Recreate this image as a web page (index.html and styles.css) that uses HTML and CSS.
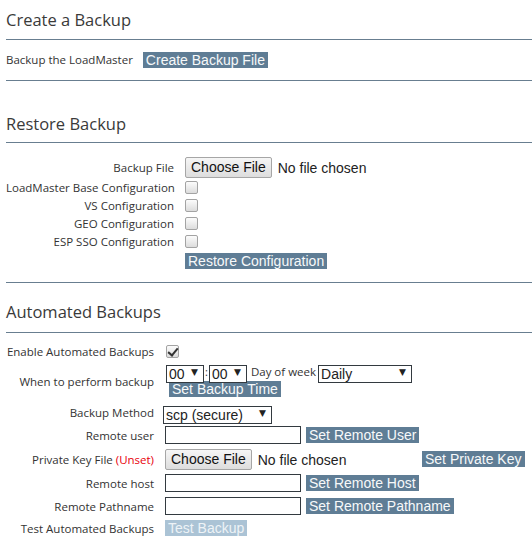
FILE: index.html
```html
<!DOCTYPE html>
<html>
<head>
<meta charset="utf-8">
<link rel="stylesheet" href="styles.css">
</head>
<body>
<div class="page">
  <section class="sec sec-create">
    <h2 class="title t1">Create a Backup</h2>
    <div class="inline-row">
      <span class="lbl">Backup the LoadMaster</span>
      <button class="btn">Create Backup File</button>
    </div>
  </section>

  <section class="sec sec-restore">
    <h2 class="title t2">Restore Backup</h2>
    <div class="form restore-form">
      <span class="lbl r">Backup File</span>
      <div class="ctl"><input type="file" class="file"></div>
      <span class="lbl r">LoadMaster Base Configuration</span>
      <div class="ctl"><input type="checkbox" class="cb"></div>
      <span class="lbl r">VS Configuration</span>
      <div class="ctl"><input type="checkbox" class="cb"></div>
      <span class="lbl r">GEO Configuration</span>
      <div class="ctl"><input type="checkbox" class="cb"></div>
      <span class="lbl r">ESP SSO Configuration</span>
      <div class="ctl"><input type="checkbox" class="cb"></div>
      <span></span>
      <div class="ctl end"><button class="btn">Restore Configuration</button></div>
    </div>
  </section>

  <section class="sec-last">
    <h2 class="title t3">Automated Backups</h2>
    <div class="form auto-form">
      <span class="lbl r">Enable Automated Backups</span>
      <div class="ctl"><input type="checkbox" class="cb cb-auto" checked></div>

      <span class="lbl r when">When to perform backup</span>
      <div class="ctl when-ctl">
        <div class="time-line">
          <span class="sel w-hh"><select><option>00</option></select></span>
          <span class="colon">:</span>
          <span class="sel w-mm"><select><option>00</option></select></span>
          <span class="dow">Day of week</span>
          <span class="sel w-day"><select><option>Daily</option></select></span>
        </div>
        <button class="btn btn-time">Set Backup Time</button>
      </div>

      <span class="lbl r">Backup Method</span>
      <div class="ctl"><span class="sel w-method"><select><option>scp (secure)</option></select></span></div>

      <span class="lbl r">Remote user</span>
      <div class="ctl"><input type="text" class="txt"><button class="btn">Set Remote User</button></div>

      <span class="lbl r">Private Key File <span class="unset">(Unset)</span></span>
      <div class="ctl"><input type="file" class="file file-key"><button class="btn">Set Private Key</button></div>

      <span class="lbl r">Remote host</span>
      <div class="ctl"><input type="text" class="txt"><button class="btn">Set Remote Host</button></div>

      <span class="lbl r">Remote Pathname</span>
      <div class="ctl"><input type="text" class="txt"><button class="btn">Set Remote Pathname</button></div>

      <span class="lbl r">Test Automated Backups</span>
      <div class="ctl"><button class="btn btn-off">Test Backup</button></div>
    </div>
  </section>
</div>
</body>
</html>
```

FILE: styles.css
```css
html, body {
  margin: 0;
  padding: 0;
  background: #ffffff;
}

.page {
  margin-left: 6px;
  font-family: "Open Sans", "Noto Sans", sans-serif;
  color: #333333;
}

.sec {
  border-bottom: 1px solid #687e90;
}

.title {
  margin: 0;
  font-weight: normal;
  font-size: 16.5px;
  line-height: 20px;
  color: #3a3a3a;
  border-bottom: 1px solid #687e90;
}

.t1 { padding: 10px 0 9px; }
.t2 { padding: 33px 0 8px; }
.t3 { padding: 19px 0 10px; }

.sec-create { padding-bottom: 12px; }

.inline-row {
  display: flex;
  align-items: center;
  gap: 10px;
  margin-top: 12px;
  height: 16px;
}

.lbl {
  font-size: 11.5px;
  line-height: 14px;
  color: #333333;
  white-space: nowrap;
}

.lbl.r {
  text-align: right;
  align-self: center;
  position: relative;
  top: 1px;
}

.unset { color: #e8000b; }

.btn {
  font-family: "Liberation Sans", Arial, sans-serif;
  font-size: 14px;
  line-height: 16px;
  height: 16px;
  padding: 0 3px;
  margin: 0;
  border: 0;
  border-radius: 0;
  background: #5f7d95;
  color: #f7f9fa;
  white-space: nowrap;
}

.btn-off {
  background: #abc3d5;
  color: #eef3f7;
}

.form {
  display: grid;
  column-gap: 11px;
  align-items: center;
}

.restore-form {
  grid-template-columns: 168px auto;
  grid-template-rows: 22px 18px 18px 18px 18px 19px;
  padding-top: 13px;
  padding-bottom: 13px;
}

.ctl {
  display: flex;
  align-items: center;
  height: 100%;
}

.ctl.end { align-items: flex-end; }

.file {
  font-family: "Liberation Sans", Arial, sans-serif;
  font-size: 14px;
  color: #222;
  width: 250px;
  height: 21px;
  margin: 0;
  padding: 0;
}

.file::file-selector-button {
  font-family: "Liberation Sans", Arial, sans-serif;
  font-size: 14px;
  height: 21px;
  padding: 0 5px;
  margin: 0 6px 0 0;
  border: 1px solid #a6a6a6;
  border-radius: 2px;
  background: linear-gradient(#f6f6f6, #dddddd);
  color: #111;
}

.cb {
  appearance: none;
  -webkit-appearance: none;
  width: 13px;
  height: 13px;
  margin: 0;
  border: 1px solid #a3a3a3;
  border-radius: 2px;
  background: linear-gradient(#fcfcfc, #dcdcdc);
  position: relative;
  box-sizing: border-box;
}

.cb:checked::after {
  content: "";
  position: absolute;
  left: 3px;
  top: 0px;
  width: 4px;
  height: 8px;
  border: solid #333;
  border-width: 0 2px 2px 0;
  transform: rotate(40deg);
}

.cb-auto { margin-left: 1px; }

.auto-form {
  grid-template-columns: 148px auto;
  grid-template-rows: 18px 40px 23px 24px 24px 23px 23px 21px;
  padding-top: 9px;
}

.when { align-self: center; padding-top: 2px; }

.when-ctl {
  flex-direction: column;
  align-items: flex-start;
  justify-content: flex-start;
  padding-top: 2px;
  box-sizing: border-box;
}

.time-line {
  display: flex;
  align-items: center;
  height: 18px;
  margin-left: 1px;
}

.btn-time { margin-left: 4px; margin-top: 1px; }

.colon {
  font-size: 11px;
  margin: 0 1px 0 1px;
}

.dow {
  font-size: 11.5px;
  margin: 0 2px 0 4px;
}

.sel {
  position: relative;
  display: inline-block;
  height: 18px;
}

.sel select {
  appearance: none;
  -webkit-appearance: none;
  height: 18px;
  width: 100%;
  margin: 0;
  padding: 0 0 0 2px;
  border: 1px solid #333a40;
  border-radius: 0;
  background: #ffffff;
  font-family: "Liberation Sans", Arial, sans-serif;
  font-size: 14px;
  line-height: 16px;
  color: #222;
  box-sizing: border-box;
}

.sel::after {
  content: "▼";
  position: absolute;
  right: 6px;
  top: 5px;
  font-family: "DejaVu Sans", sans-serif;
  font-size: 9px;
  line-height: 10px;
  color: #222;
  pointer-events: none;
}

.w-hh { width: 38px; }
.w-mm { width: 38px; }
.w-day { width: 94px; }
.w-method { width: 109px; margin-left: -2px; }

.txt {
  width: 136px;
  height: 18px;
  margin: 0 5px 0 0;
  padding: 0 2px;
  border: 1px solid #333a40;
  border-radius: 0;
  box-sizing: border-box;
  font-family: "Liberation Sans", Arial, sans-serif;
  font-size: 13px;
}

.file-key { width: 252px; margin-right: 5px; }
```
